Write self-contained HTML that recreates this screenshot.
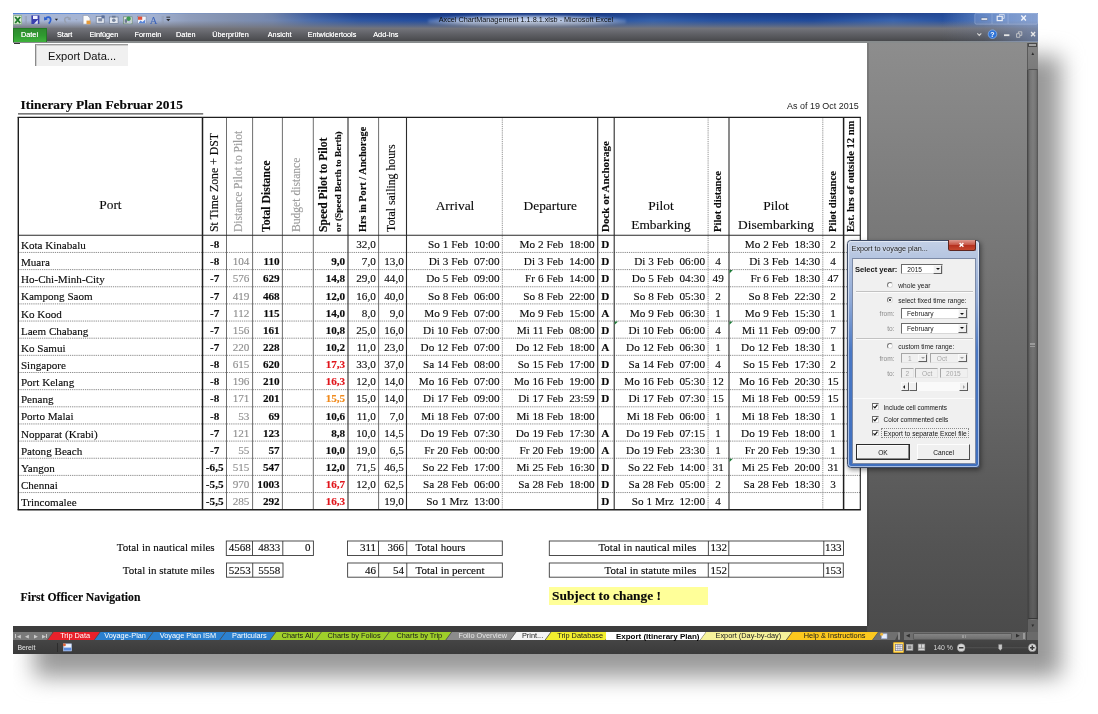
<!DOCTYPE html>
<html lang="de"><head><meta charset="utf-8"><title>Axcel ChartManagement 1.1.8.1.xlsb - Microsoft Excel</title>
<style>
html,body{margin:0;padding:0;background:#fff;}
body{width:1098px;height:714px;position:relative;overflow:hidden;font-family:"Liberation Serif",serif;}
div{position:absolute;box-sizing:border-box;white-space:pre;}
.s{font-family:"Liberation Sans",sans-serif;}
.t{font-family:"Liberation Serif",serif;color:#0a0a0a;-webkit-text-stroke:0.13px currentColor;}
.b{font-weight:bold;}
.g{color:#8e8e8e;}
.rot{transform-origin:0 0;transform:rotate(-90deg);}
.vl{background:#2a2a2a;}
.hl{background:#c4c4c4;}
</style></head><body>
<div id="root" style="left:0;top:0;width:1098px;height:714px;will-change:transform;">

<div style="left:34px;top:56px;width:1027px;height:621px;background:#999;filter:blur(11px);"></div>
<div style="left:0;top:0;width:13px;height:714px;background:#fff"></div>
<div id="win" style="left:13px;top:13px;width:1025px;height:641px;background:#4a4a4a;overflow:hidden">
</div>
<div style="left:13.00px;top:13.00px;width:1025.00px;height:15.50px;background:linear-gradient(90deg,#a9b7d5 0px,#a3b2d1 140px,#8f9dbb 175px,#8291b0 215px,#7487ae 260px,#4a6cab 300px,#2f57a2 345px,#27509f 390px,#1f4a9a 480px,#1e4897 560px,#3561ab 640px,#2752a0 700px,#214b9a 800px,#3964ae 880px,#2953a1 930px,#5f86c6 985px,#86a5d6 1025px);"></div>
<div style="left:263.00px;top:13.00px;width:715.00px;height:7.00px;background:linear-gradient(180deg,rgba(10,30,100,.45),rgba(10,30,100,0));-webkit-mask-image:linear-gradient(90deg,transparent 0,#000 90px,#000 640px,transparent 715px);mask-image:linear-gradient(90deg,transparent 0,#000 90px,#000 640px,transparent 715px);"></div>
<div style="left:428.00px;top:14.50px;width:198.00px;height:13.00px;background:radial-gradient(ellipse at center,rgba(222,231,248,.92) 0%,rgba(222,231,248,.7) 50%,rgba(222,231,248,0) 78%);filter:blur(1.2px);"></div>
<div style="left:13.00px;top:13.00px;width:1025.00px;height:15.50px;background:linear-gradient(180deg,rgba(116,117,124,0) 0%,rgba(116,117,124,0) 48%,rgba(116,117,124,.5) 74%,rgba(116,117,124,1) 97%);"></div>
<div style="left:13.00px;top:13.00px;width:240.00px;height:1.00px;background:linear-gradient(90deg,rgba(70,125,215,.85),rgba(70,125,215,0))"></div>
<div style="left:13.00px;top:27.50px;width:1025.00px;height:15.00px;background:linear-gradient(180deg,#74757c 0%,#606166 45%,#48494c 100%);border-bottom:2px solid #878b8c;"></div>
<div style="left:13.00px;top:27.50px;width:33.60px;height:14.50px;background:linear-gradient(180deg,#2f8a2f 0%,#2f9a30 50%,#3fb23c 100%);border:1px solid #237a25;border-bottom:none;"></div>
<div class="s" style="top:30.82px;font-size:7.3px;line-height:8.76px;left:-170.50px;width:400px;text-align:center;color:#f4f4f4;text-shadow:0 0 .4px #fff;">Datei</div>
<div class="s" style="top:30.82px;font-size:7.3px;line-height:8.76px;left:-135.30px;width:400px;text-align:center;color:#f4f4f4;text-shadow:0 0 .4px #fff;">Start</div>
<div class="s" style="top:30.82px;font-size:7.3px;line-height:8.76px;left:-96.20px;width:400px;text-align:center;color:#f4f4f4;text-shadow:0 0 .4px #fff;">Einfügen</div>
<div class="s" style="top:30.82px;font-size:7.3px;line-height:8.76px;left:-52.00px;width:400px;text-align:center;color:#f4f4f4;text-shadow:0 0 .4px #fff;">Formeln</div>
<div class="s" style="top:30.82px;font-size:7.3px;line-height:8.76px;left:-14.20px;width:400px;text-align:center;color:#f4f4f4;text-shadow:0 0 .4px #fff;">Daten</div>
<div class="s" style="top:30.82px;font-size:7.3px;line-height:8.76px;left:30.50px;width:400px;text-align:center;color:#f4f4f4;text-shadow:0 0 .4px #fff;">Überprüfen</div>
<div class="s" style="top:30.82px;font-size:7.3px;line-height:8.76px;left:79.70px;width:400px;text-align:center;color:#f4f4f4;text-shadow:0 0 .4px #fff;">Ansicht</div>
<div class="s" style="top:30.82px;font-size:7.3px;line-height:8.76px;left:132.00px;width:400px;text-align:center;color:#f4f4f4;text-shadow:0 0 .4px #fff;">Entwicklertools</div>
<div class="s" style="top:30.82px;font-size:7.3px;line-height:8.76px;left:185.80px;width:400px;text-align:center;color:#f4f4f4;text-shadow:0 0 .4px #fff;">Add-Ins</div>
<div class="s" style="top:15.85px;font-size:7.25px;line-height:8.70px;left:326.00px;width:400px;text-align:center;color:#0c0c0c;">Axcel ChartManagement 1.1.8.1.xlsb - Microsoft Excel</div>
<div style="left:867.00px;top:42.50px;width:160.00px;height:589.50px;background:linear-gradient(180deg,#8d8d8d 0%,#7d7d7d 25%,#6a6a6a 55%,#545454 85%,#4b4b4b 100%);"></div>
<div style="left:867.00px;top:42.50px;width:1.50px;height:583.50px;background:rgba(0,0,0,.12);"></div>
<div style="left:13.00px;top:42.50px;width:854.00px;height:583.50px;background:#fff;"></div>
<div style="left:1027.00px;top:42.50px;width:11.00px;height:589.50px;background:linear-gradient(90deg,#5a5a5a,#747474 40%,#6a6a6a 80%,#505050);border-left:1px solid #474747;"></div>
<div style="left:13.00px;top:626.00px;width:854.00px;height:6.00px;background:#3d3d3d;"></div>
<div style="left:13.00px;top:632.00px;width:1025.00px;height:8.20px;background:#4b4b4b;"></div>
<div style="left:13.00px;top:640.00px;width:1025.00px;height:14.00px;background:linear-gradient(180deg,#454545,#3a3a3a);"></div>
<div style="left:35.00px;top:44.00px;width:93.00px;height:22.00px;background:#f0f0f0;border-left:1px solid #8a8a8a;border-top:1px solid #9c9c9c;box-shadow:inset 1px 1px 0 #cfcfcf;"></div>
<div class="s" style="top:49.61px;font-size:11.15px;line-height:13.38px;left:48.00px;color:#111;">Export Data...</div>
<div style="left:13.50px;top:42.60px;width:6.00px;height:1.40px;background:#333;"></div>
<div class="t b" style="top:96.56px;font-size:13.4px;line-height:16.08px;left:20.60px;">Itinerary Plan Februar 2015</div>
<div class="s" style="top:100.83px;font-size:8.95px;line-height:10.74px;right:239.40px;color:#222;">As of 19 Oct 2015</div>
<svg style="position:absolute;left:0;top:0" width="1098" height="714" viewBox="0 0 1098 714"><line x1="18.30" y1="252.45" x2="860.30" y2="252.45" stroke="#8c8c8c" stroke-width="1" stroke-dasharray="1.25 0.9"/><line x1="18.30" y1="269.60" x2="860.30" y2="269.60" stroke="#8c8c8c" stroke-width="1" stroke-dasharray="1.25 0.9"/><line x1="18.30" y1="286.75" x2="860.30" y2="286.75" stroke="#8c8c8c" stroke-width="1" stroke-dasharray="1.25 0.9"/><line x1="18.30" y1="303.90" x2="860.30" y2="303.90" stroke="#8c8c8c" stroke-width="1" stroke-dasharray="1.25 0.9"/><line x1="18.30" y1="321.05" x2="860.30" y2="321.05" stroke="#8c8c8c" stroke-width="1" stroke-dasharray="1.25 0.9"/><line x1="18.30" y1="338.20" x2="860.30" y2="338.20" stroke="#8c8c8c" stroke-width="1" stroke-dasharray="1.25 0.9"/><line x1="18.30" y1="355.35" x2="860.30" y2="355.35" stroke="#8c8c8c" stroke-width="1" stroke-dasharray="1.25 0.9"/><line x1="18.30" y1="372.50" x2="860.30" y2="372.50" stroke="#8c8c8c" stroke-width="1" stroke-dasharray="1.25 0.9"/><line x1="18.30" y1="389.65" x2="860.30" y2="389.65" stroke="#8c8c8c" stroke-width="1" stroke-dasharray="1.25 0.9"/><line x1="18.30" y1="406.80" x2="860.30" y2="406.80" stroke="#8c8c8c" stroke-width="1" stroke-dasharray="1.25 0.9"/><line x1="18.30" y1="423.95" x2="860.30" y2="423.95" stroke="#8c8c8c" stroke-width="1" stroke-dasharray="1.25 0.9"/><line x1="18.30" y1="441.10" x2="860.30" y2="441.10" stroke="#8c8c8c" stroke-width="1" stroke-dasharray="1.25 0.9"/><line x1="18.30" y1="458.25" x2="860.30" y2="458.25" stroke="#8c8c8c" stroke-width="1" stroke-dasharray="1.25 0.9"/><line x1="18.30" y1="475.40" x2="860.30" y2="475.40" stroke="#8c8c8c" stroke-width="1" stroke-dasharray="1.25 0.9"/><line x1="18.30" y1="492.55" x2="860.30" y2="492.55" stroke="#8c8c8c" stroke-width="1" stroke-dasharray="1.25 0.9"/><line x1="202.50" y1="117.30" x2="202.50" y2="509.70" stroke="#1e1e1e" stroke-width="1.5"/><line x1="226.50" y1="117.30" x2="226.50" y2="509.70" stroke="#5e5e5e" stroke-width="0.9"/><line x1="252.60" y1="117.30" x2="252.60" y2="509.70" stroke="#5e5e5e" stroke-width="0.9"/><line x1="282.40" y1="117.30" x2="282.40" y2="509.70" stroke="#5e5e5e" stroke-width="0.9"/><line x1="313.30" y1="117.30" x2="313.30" y2="509.70" stroke="#5e5e5e" stroke-width="0.9"/><line x1="348.00" y1="117.30" x2="348.00" y2="509.70" stroke="#2c2c2c" stroke-width="1.1"/><line x1="378.60" y1="117.30" x2="378.60" y2="509.70" stroke="#5e5e5e" stroke-width="0.9"/><line x1="406.50" y1="117.30" x2="406.50" y2="509.70" stroke="#2c2c2c" stroke-width="1.1"/><line x1="502.30" y1="117.30" x2="502.30" y2="509.70" stroke="#959595" stroke-width="1" stroke-dasharray="1.25 0.9"/><line x1="597.70" y1="117.30" x2="597.70" y2="509.70" stroke="#2c2c2c" stroke-width="1.1"/><line x1="614.20" y1="117.30" x2="614.20" y2="509.70" stroke="#2c2c2c" stroke-width="1.1"/><line x1="708.10" y1="117.30" x2="708.10" y2="509.70" stroke="#959595" stroke-width="1" stroke-dasharray="1.25 0.9"/><line x1="729.00" y1="117.30" x2="729.00" y2="509.70" stroke="#2c2c2c" stroke-width="1.1"/><line x1="822.80" y1="117.30" x2="822.80" y2="509.70" stroke="#959595" stroke-width="1" stroke-dasharray="1.25 0.9"/><line x1="843.60" y1="117.30" x2="843.60" y2="509.70" stroke="#1e1e1e" stroke-width="1.5"/><line x1="18.30" y1="235.30" x2="860.30" y2="235.30" stroke="#2a2a2a" stroke-width="1.1"/><line x1="17.60" y1="117.30" x2="860.85" y2="117.30" stroke="#1e1e1e" stroke-width="1.3"/><line x1="17.60" y1="509.70" x2="860.85" y2="509.70" stroke="#1e1e1e" stroke-width="1.4"/><line x1="18.30" y1="117.30" x2="18.30" y2="509.70" stroke="#1e1e1e" stroke-width="1.4"/><line x1="860.30" y1="117.30" x2="860.30" y2="509.70" stroke="#1e1e1e" stroke-width="1.1"/><line x1="18.00" y1="113.90" x2="203.20" y2="113.90" stroke="#222" stroke-width="1"/></svg>
<div class="t rot" style="left:207.22px;top:232.20px;font-size:11.8px;line-height:14.16px;">St Time Zone + DST</div>
<div class="t g rot" style="left:232.40px;top:232.20px;font-size:11.5px;line-height:13.80px;color:#9c9c9c;">Distance Pilot to Pilot</div>
<div class="t b rot" style="left:260.28px;top:232.20px;font-size:11.7px;line-height:14.04px;">Total Distance</div>
<div class="t g rot" style="left:289.74px;top:232.20px;font-size:11.6px;line-height:13.92px;color:#9c9c9c;">Budget distance</div>
<div class="t b rot" style="left:317.34px;top:232.20px;font-size:11.6px;line-height:13.92px;">Speed Pilot to Pilot</div>
<div class="t b rot" style="left:333.04px;top:232.20px;font-size:9.27px;line-height:11.12px;">or (Speed Berth to Berth)</div>
<div class="t b rot" style="left:356.82px;top:232.20px;font-size:10.3px;line-height:12.36px;">Hrs in Port / Anchorage</div>
<div class="t rot" style="left:384.12px;top:232.20px;font-size:11.8px;line-height:14.16px;">Total sailing hours</div>
<div class="t b rot" style="left:599.40px;top:232.20px;font-size:11.0px;line-height:13.20px;">Dock or Anchorage</div>
<div class="t b rot" style="left:712.24px;top:232.00px;font-size:10.6px;line-height:12.72px;">Pilot distance</div>
<div class="t b rot" style="left:827.04px;top:232.00px;font-size:10.6px;line-height:12.72px;">Pilot distance</div>
<div class="t b rot" style="left:845.27px;top:232.20px;font-size:10.55px;line-height:12.66px;">Est. hrs of outside 12 nm</div>
<div class="t" style="top:197.46px;font-size:13.4px;line-height:16.08px;left:-89.60px;width:400px;text-align:center;">Port</div>
<div class="t" style="top:197.76px;font-size:13.4px;line-height:16.08px;left:255.00px;width:400px;text-align:center;">Arrival</div>
<div class="t" style="top:197.76px;font-size:13.4px;line-height:16.08px;left:350.30px;width:400px;text-align:center;">Departure</div>
<div class="t" style="top:197.76px;font-size:13.4px;line-height:16.08px;left:461.00px;width:400px;text-align:center;">Pilot</div>
<div class="t" style="top:217.26px;font-size:13.4px;line-height:16.08px;left:461.00px;width:400px;text-align:center;">Embarking</div>
<div class="t" style="top:197.76px;font-size:13.4px;line-height:16.08px;left:576.00px;width:400px;text-align:center;">Pilot</div>
<div class="t" style="top:217.26px;font-size:13.4px;line-height:16.08px;left:576.00px;width:400px;text-align:center;">Disembarking</div>
<div class="t" style="top:238.97px;font-size:11.1px;line-height:13.32px;left:20.90px;">Kota Kinabalu</div>
<div class="t b" style="top:238.06px;font-size:11.2px;line-height:13.44px;left:14.70px;width:400px;text-align:center;">-8</div>
<div class="t" style="top:238.06px;font-size:11.2px;line-height:13.44px;right:722.20px;">32,0</div>
<div class="t" style="top:238.06px;font-size:11.2px;line-height:13.44px;right:598.50px;word-spacing:0.15px;">So 1 Feb  10:00</div>
<div class="t" style="top:238.06px;font-size:11.2px;line-height:13.44px;right:503.30px;word-spacing:0.15px;">Mo 2 Feb  18:00</div>
<div class="t b" style="top:238.06px;font-size:11.2px;line-height:13.44px;left:405.25px;width:400px;text-align:center;">D</div>
<div class="t" style="top:238.06px;font-size:11.2px;line-height:13.44px;right:278.00px;word-spacing:0.15px;">Mo 2 Feb  18:30</div>
<div class="t" style="top:238.06px;font-size:11.2px;line-height:13.44px;left:633.10px;width:400px;text-align:center;">2</div>
<div class="t" style="top:256.12px;font-size:11.1px;line-height:13.32px;left:20.90px;">Muara</div>
<div class="t b" style="top:255.21px;font-size:11.2px;line-height:13.44px;left:14.70px;width:400px;text-align:center;">-8</div>
<div class="t g" style="top:255.21px;font-size:11.2px;line-height:13.44px;right:848.60px;">104</div>
<div class="t b" style="top:255.21px;font-size:11.2px;line-height:13.44px;right:818.30px;">110</div>
<div class="t b" style="top:255.21px;font-size:11.2px;line-height:13.44px;right:752.80px;">9,0</div>
<div class="t" style="top:255.21px;font-size:11.2px;line-height:13.44px;right:722.20px;">7,0</div>
<div class="t" style="top:255.21px;font-size:11.2px;line-height:13.44px;right:694.20px;">13,0</div>
<div class="t" style="top:255.21px;font-size:11.2px;line-height:13.44px;right:598.50px;word-spacing:0.15px;">Di 3 Feb  07:00</div>
<div class="t" style="top:255.21px;font-size:11.2px;line-height:13.44px;right:503.30px;word-spacing:0.15px;">Di 3 Feb  14:00</div>
<div class="t b" style="top:255.21px;font-size:11.2px;line-height:13.44px;left:405.25px;width:400px;text-align:center;">D</div>
<div class="t" style="top:255.21px;font-size:11.2px;line-height:13.44px;right:393.00px;word-spacing:0.15px;">Di 3 Feb  06:00</div>
<div class="t" style="top:255.21px;font-size:11.2px;line-height:13.44px;left:518.15px;width:400px;text-align:center;">4</div>
<div class="t" style="top:255.21px;font-size:11.2px;line-height:13.44px;right:278.00px;word-spacing:0.15px;">Di 3 Feb  14:30</div>
<div class="t" style="top:255.21px;font-size:11.2px;line-height:13.44px;left:633.10px;width:400px;text-align:center;">4</div>
<div class="t" style="top:273.26px;font-size:11.1px;line-height:13.32px;left:20.90px;">Ho-Chi-Minh-City</div>
<div class="t b" style="top:272.35px;font-size:11.2px;line-height:13.44px;left:14.70px;width:400px;text-align:center;">-7</div>
<div class="t g" style="top:272.35px;font-size:11.2px;line-height:13.44px;right:848.60px;">576</div>
<div class="t b" style="top:272.35px;font-size:11.2px;line-height:13.44px;right:818.30px;">629</div>
<div class="t b" style="top:272.35px;font-size:11.2px;line-height:13.44px;right:752.80px;">14,8</div>
<div class="t" style="top:272.35px;font-size:11.2px;line-height:13.44px;right:722.20px;">29,0</div>
<div class="t" style="top:272.35px;font-size:11.2px;line-height:13.44px;right:694.20px;">44,0</div>
<div class="t" style="top:272.35px;font-size:11.2px;line-height:13.44px;right:598.50px;word-spacing:0.15px;">Do 5 Feb  09:00</div>
<div class="t" style="top:272.35px;font-size:11.2px;line-height:13.44px;right:503.30px;word-spacing:0.15px;">Fr 6 Feb  14:00</div>
<div class="t b" style="top:272.35px;font-size:11.2px;line-height:13.44px;left:405.25px;width:400px;text-align:center;">D</div>
<div class="t" style="top:272.35px;font-size:11.2px;line-height:13.44px;right:393.00px;word-spacing:0.15px;">Do 5 Feb  04:30</div>
<div class="t" style="top:272.35px;font-size:11.2px;line-height:13.44px;left:518.15px;width:400px;text-align:center;">49</div>
<div class="t" style="top:272.35px;font-size:11.2px;line-height:13.44px;right:278.00px;word-spacing:0.15px;">Fr 6 Feb  18:30</div>
<div class="t" style="top:272.35px;font-size:11.2px;line-height:13.44px;left:633.10px;width:400px;text-align:center;">47</div>
<div class="t" style="top:290.41px;font-size:11.1px;line-height:13.32px;left:20.90px;">Kampong Saom</div>
<div class="t b" style="top:289.50px;font-size:11.2px;line-height:13.44px;left:14.70px;width:400px;text-align:center;">-7</div>
<div class="t g" style="top:289.50px;font-size:11.2px;line-height:13.44px;right:848.60px;">419</div>
<div class="t b" style="top:289.50px;font-size:11.2px;line-height:13.44px;right:818.30px;">468</div>
<div class="t b" style="top:289.50px;font-size:11.2px;line-height:13.44px;right:752.80px;">12,0</div>
<div class="t" style="top:289.50px;font-size:11.2px;line-height:13.44px;right:722.20px;">16,0</div>
<div class="t" style="top:289.50px;font-size:11.2px;line-height:13.44px;right:694.20px;">40,0</div>
<div class="t" style="top:289.50px;font-size:11.2px;line-height:13.44px;right:598.50px;word-spacing:0.15px;">So 8 Feb  06:00</div>
<div class="t" style="top:289.50px;font-size:11.2px;line-height:13.44px;right:503.30px;word-spacing:0.15px;">So 8 Feb  22:00</div>
<div class="t b" style="top:289.50px;font-size:11.2px;line-height:13.44px;left:405.25px;width:400px;text-align:center;">D</div>
<div class="t" style="top:289.50px;font-size:11.2px;line-height:13.44px;right:393.00px;word-spacing:0.15px;">So 8 Feb  05:30</div>
<div class="t" style="top:289.50px;font-size:11.2px;line-height:13.44px;left:518.15px;width:400px;text-align:center;">2</div>
<div class="t" style="top:289.50px;font-size:11.2px;line-height:13.44px;right:278.00px;word-spacing:0.15px;">So 8 Feb  22:30</div>
<div class="t" style="top:289.50px;font-size:11.2px;line-height:13.44px;left:633.10px;width:400px;text-align:center;">2</div>
<div class="t" style="top:307.56px;font-size:11.1px;line-height:13.32px;left:20.90px;">Ko Kood</div>
<div class="t b" style="top:306.65px;font-size:11.2px;line-height:13.44px;left:14.70px;width:400px;text-align:center;">-7</div>
<div class="t g" style="top:306.65px;font-size:11.2px;line-height:13.44px;right:848.60px;">112</div>
<div class="t b" style="top:306.65px;font-size:11.2px;line-height:13.44px;right:818.30px;">115</div>
<div class="t b" style="top:306.65px;font-size:11.2px;line-height:13.44px;right:752.80px;">14,0</div>
<div class="t" style="top:306.65px;font-size:11.2px;line-height:13.44px;right:722.20px;">8,0</div>
<div class="t" style="top:306.65px;font-size:11.2px;line-height:13.44px;right:694.20px;">9,0</div>
<div class="t" style="top:306.65px;font-size:11.2px;line-height:13.44px;right:598.50px;word-spacing:0.15px;">Mo 9 Feb  07:00</div>
<div class="t" style="top:306.65px;font-size:11.2px;line-height:13.44px;right:503.30px;word-spacing:0.15px;">Mo 9 Feb  15:00</div>
<div class="t b" style="top:306.65px;font-size:11.2px;line-height:13.44px;left:405.25px;width:400px;text-align:center;">A</div>
<div class="t" style="top:306.65px;font-size:11.2px;line-height:13.44px;right:393.00px;word-spacing:0.15px;">Mo 9 Feb  06:30</div>
<div class="t" style="top:306.65px;font-size:11.2px;line-height:13.44px;left:518.15px;width:400px;text-align:center;">1</div>
<div class="t" style="top:306.65px;font-size:11.2px;line-height:13.44px;right:278.00px;word-spacing:0.15px;">Mo 9 Feb  15:30</div>
<div class="t" style="top:306.65px;font-size:11.2px;line-height:13.44px;left:633.10px;width:400px;text-align:center;">1</div>
<div class="t" style="top:324.71px;font-size:11.1px;line-height:13.32px;left:20.90px;">Laem Chabang</div>
<div class="t b" style="top:323.80px;font-size:11.2px;line-height:13.44px;left:14.70px;width:400px;text-align:center;">-7</div>
<div class="t g" style="top:323.80px;font-size:11.2px;line-height:13.44px;right:848.60px;">156</div>
<div class="t b" style="top:323.80px;font-size:11.2px;line-height:13.44px;right:818.30px;">161</div>
<div class="t b" style="top:323.80px;font-size:11.2px;line-height:13.44px;right:752.80px;">10,8</div>
<div class="t" style="top:323.80px;font-size:11.2px;line-height:13.44px;right:722.20px;">25,0</div>
<div class="t" style="top:323.80px;font-size:11.2px;line-height:13.44px;right:694.20px;">16,0</div>
<div class="t" style="top:323.80px;font-size:11.2px;line-height:13.44px;right:598.50px;word-spacing:0.15px;">Di 10 Feb  07:00</div>
<div class="t" style="top:323.80px;font-size:11.2px;line-height:13.44px;right:503.30px;word-spacing:0.15px;">Mi 11 Feb  08:00</div>
<div class="t b" style="top:323.80px;font-size:11.2px;line-height:13.44px;left:405.25px;width:400px;text-align:center;">D</div>
<div class="t" style="top:323.80px;font-size:11.2px;line-height:13.44px;right:393.00px;word-spacing:0.15px;">Di 10 Feb  06:00</div>
<div class="t" style="top:323.80px;font-size:11.2px;line-height:13.44px;left:518.15px;width:400px;text-align:center;">4</div>
<div class="t" style="top:323.80px;font-size:11.2px;line-height:13.44px;right:278.00px;word-spacing:0.15px;">Mi 11 Feb  09:00</div>
<div class="t" style="top:323.80px;font-size:11.2px;line-height:13.44px;left:633.10px;width:400px;text-align:center;">7</div>
<div class="t" style="top:341.86px;font-size:11.1px;line-height:13.32px;left:20.90px;">Ko Samui</div>
<div class="t b" style="top:340.95px;font-size:11.2px;line-height:13.44px;left:14.70px;width:400px;text-align:center;">-7</div>
<div class="t g" style="top:340.95px;font-size:11.2px;line-height:13.44px;right:848.60px;">220</div>
<div class="t b" style="top:340.95px;font-size:11.2px;line-height:13.44px;right:818.30px;">228</div>
<div class="t b" style="top:340.95px;font-size:11.2px;line-height:13.44px;right:752.80px;">10,2</div>
<div class="t" style="top:340.95px;font-size:11.2px;line-height:13.44px;right:722.20px;">11,0</div>
<div class="t" style="top:340.95px;font-size:11.2px;line-height:13.44px;right:694.20px;">23,0</div>
<div class="t" style="top:340.95px;font-size:11.2px;line-height:13.44px;right:598.50px;word-spacing:0.15px;">Do 12 Feb  07:00</div>
<div class="t" style="top:340.95px;font-size:11.2px;line-height:13.44px;right:503.30px;word-spacing:0.15px;">Do 12 Feb  18:00</div>
<div class="t b" style="top:340.95px;font-size:11.2px;line-height:13.44px;left:405.25px;width:400px;text-align:center;">A</div>
<div class="t" style="top:340.95px;font-size:11.2px;line-height:13.44px;right:393.00px;word-spacing:0.15px;">Do 12 Feb  06:30</div>
<div class="t" style="top:340.95px;font-size:11.2px;line-height:13.44px;left:518.15px;width:400px;text-align:center;">1</div>
<div class="t" style="top:340.95px;font-size:11.2px;line-height:13.44px;right:278.00px;word-spacing:0.15px;">Do 12 Feb  18:30</div>
<div class="t" style="top:340.95px;font-size:11.2px;line-height:13.44px;left:633.10px;width:400px;text-align:center;">1</div>
<div class="t" style="top:359.01px;font-size:11.1px;line-height:13.32px;left:20.90px;">Singapore</div>
<div class="t b" style="top:358.10px;font-size:11.2px;line-height:13.44px;left:14.70px;width:400px;text-align:center;">-8</div>
<div class="t g" style="top:358.10px;font-size:11.2px;line-height:13.44px;right:848.60px;">615</div>
<div class="t b" style="top:358.10px;font-size:11.2px;line-height:13.44px;right:818.30px;">620</div>
<div class="t b" style="top:358.10px;font-size:11.2px;line-height:13.44px;right:752.80px;color:#e0141a;">17,3</div>
<div class="t" style="top:358.10px;font-size:11.2px;line-height:13.44px;right:722.20px;">33,0</div>
<div class="t" style="top:358.10px;font-size:11.2px;line-height:13.44px;right:694.20px;">37,0</div>
<div class="t" style="top:358.10px;font-size:11.2px;line-height:13.44px;right:598.50px;word-spacing:0.15px;">Sa 14 Feb  08:00</div>
<div class="t" style="top:358.10px;font-size:11.2px;line-height:13.44px;right:503.30px;word-spacing:0.15px;">So 15 Feb  17:00</div>
<div class="t b" style="top:358.10px;font-size:11.2px;line-height:13.44px;left:405.25px;width:400px;text-align:center;">D</div>
<div class="t" style="top:358.10px;font-size:11.2px;line-height:13.44px;right:393.00px;word-spacing:0.15px;">Sa 14 Feb  07:00</div>
<div class="t" style="top:358.10px;font-size:11.2px;line-height:13.44px;left:518.15px;width:400px;text-align:center;">4</div>
<div class="t" style="top:358.10px;font-size:11.2px;line-height:13.44px;right:278.00px;word-spacing:0.15px;">So 15 Feb  17:30</div>
<div class="t" style="top:358.10px;font-size:11.2px;line-height:13.44px;left:633.10px;width:400px;text-align:center;">2</div>
<div class="t" style="top:376.16px;font-size:11.1px;line-height:13.32px;left:20.90px;">Port Kelang</div>
<div class="t b" style="top:375.25px;font-size:11.2px;line-height:13.44px;left:14.70px;width:400px;text-align:center;">-8</div>
<div class="t g" style="top:375.25px;font-size:11.2px;line-height:13.44px;right:848.60px;">196</div>
<div class="t b" style="top:375.25px;font-size:11.2px;line-height:13.44px;right:818.30px;">210</div>
<div class="t b" style="top:375.25px;font-size:11.2px;line-height:13.44px;right:752.80px;color:#e0141a;">16,3</div>
<div class="t" style="top:375.25px;font-size:11.2px;line-height:13.44px;right:722.20px;">12,0</div>
<div class="t" style="top:375.25px;font-size:11.2px;line-height:13.44px;right:694.20px;">14,0</div>
<div class="t" style="top:375.25px;font-size:11.2px;line-height:13.44px;right:598.50px;word-spacing:0.15px;">Mo 16 Feb  07:00</div>
<div class="t" style="top:375.25px;font-size:11.2px;line-height:13.44px;right:503.30px;word-spacing:0.15px;">Mo 16 Feb  19:00</div>
<div class="t b" style="top:375.25px;font-size:11.2px;line-height:13.44px;left:405.25px;width:400px;text-align:center;">D</div>
<div class="t" style="top:375.25px;font-size:11.2px;line-height:13.44px;right:393.00px;word-spacing:0.15px;">Mo 16 Feb  05:30</div>
<div class="t" style="top:375.25px;font-size:11.2px;line-height:13.44px;left:518.15px;width:400px;text-align:center;">12</div>
<div class="t" style="top:375.25px;font-size:11.2px;line-height:13.44px;right:278.00px;word-spacing:0.15px;">Mo 16 Feb  20:30</div>
<div class="t" style="top:375.25px;font-size:11.2px;line-height:13.44px;left:633.10px;width:400px;text-align:center;">15</div>
<div class="t" style="top:393.31px;font-size:11.1px;line-height:13.32px;left:20.90px;">Penang</div>
<div class="t b" style="top:392.40px;font-size:11.2px;line-height:13.44px;left:14.70px;width:400px;text-align:center;">-8</div>
<div class="t g" style="top:392.40px;font-size:11.2px;line-height:13.44px;right:848.60px;">171</div>
<div class="t b" style="top:392.40px;font-size:11.2px;line-height:13.44px;right:818.30px;">201</div>
<div class="t b" style="top:392.40px;font-size:11.2px;line-height:13.44px;right:752.80px;color:#f08a1c;">15,5</div>
<div class="t" style="top:392.40px;font-size:11.2px;line-height:13.44px;right:722.20px;">15,0</div>
<div class="t" style="top:392.40px;font-size:11.2px;line-height:13.44px;right:694.20px;">14,0</div>
<div class="t" style="top:392.40px;font-size:11.2px;line-height:13.44px;right:598.50px;word-spacing:0.15px;">Di 17 Feb  09:00</div>
<div class="t" style="top:392.40px;font-size:11.2px;line-height:13.44px;right:503.30px;word-spacing:0.15px;">Di 17 Feb  23:59</div>
<div class="t b" style="top:392.40px;font-size:11.2px;line-height:13.44px;left:405.25px;width:400px;text-align:center;">D</div>
<div class="t" style="top:392.40px;font-size:11.2px;line-height:13.44px;right:393.00px;word-spacing:0.15px;">Di 17 Feb  07:30</div>
<div class="t" style="top:392.40px;font-size:11.2px;line-height:13.44px;left:518.15px;width:400px;text-align:center;">15</div>
<div class="t" style="top:392.40px;font-size:11.2px;line-height:13.44px;right:278.00px;word-spacing:0.15px;">Mi 18 Feb  00:59</div>
<div class="t" style="top:392.40px;font-size:11.2px;line-height:13.44px;left:633.10px;width:400px;text-align:center;">15</div>
<div class="t" style="top:410.46px;font-size:11.1px;line-height:13.32px;left:20.90px;">Porto Malai</div>
<div class="t b" style="top:409.55px;font-size:11.2px;line-height:13.44px;left:14.70px;width:400px;text-align:center;">-8</div>
<div class="t g" style="top:409.55px;font-size:11.2px;line-height:13.44px;right:848.60px;">53</div>
<div class="t b" style="top:409.55px;font-size:11.2px;line-height:13.44px;right:818.30px;">69</div>
<div class="t b" style="top:409.55px;font-size:11.2px;line-height:13.44px;right:752.80px;">10,6</div>
<div class="t" style="top:409.55px;font-size:11.2px;line-height:13.44px;right:722.20px;">11,0</div>
<div class="t" style="top:409.55px;font-size:11.2px;line-height:13.44px;right:694.20px;">7,0</div>
<div class="t" style="top:409.55px;font-size:11.2px;line-height:13.44px;right:598.50px;word-spacing:0.15px;">Mi 18 Feb  07:00</div>
<div class="t" style="top:409.55px;font-size:11.2px;line-height:13.44px;right:503.30px;word-spacing:0.15px;">Mi 18 Feb  18:00</div>
<div class="t" style="top:409.55px;font-size:11.2px;line-height:13.44px;right:393.00px;word-spacing:0.15px;">Mi 18 Feb  06:00</div>
<div class="t" style="top:409.55px;font-size:11.2px;line-height:13.44px;left:518.15px;width:400px;text-align:center;">1</div>
<div class="t" style="top:409.55px;font-size:11.2px;line-height:13.44px;right:278.00px;word-spacing:0.15px;">Mi 18 Feb  18:30</div>
<div class="t" style="top:409.55px;font-size:11.2px;line-height:13.44px;left:633.10px;width:400px;text-align:center;">1</div>
<div class="t" style="top:427.61px;font-size:11.1px;line-height:13.32px;left:20.90px;">Nopparat (Krabi)</div>
<div class="t b" style="top:426.70px;font-size:11.2px;line-height:13.44px;left:14.70px;width:400px;text-align:center;">-7</div>
<div class="t g" style="top:426.70px;font-size:11.2px;line-height:13.44px;right:848.60px;">121</div>
<div class="t b" style="top:426.70px;font-size:11.2px;line-height:13.44px;right:818.30px;">123</div>
<div class="t b" style="top:426.70px;font-size:11.2px;line-height:13.44px;right:752.80px;">8,8</div>
<div class="t" style="top:426.70px;font-size:11.2px;line-height:13.44px;right:722.20px;">10,0</div>
<div class="t" style="top:426.70px;font-size:11.2px;line-height:13.44px;right:694.20px;">14,5</div>
<div class="t" style="top:426.70px;font-size:11.2px;line-height:13.44px;right:598.50px;word-spacing:0.15px;">Do 19 Feb  07:30</div>
<div class="t" style="top:426.70px;font-size:11.2px;line-height:13.44px;right:503.30px;word-spacing:0.15px;">Do 19 Feb  17:30</div>
<div class="t b" style="top:426.70px;font-size:11.2px;line-height:13.44px;left:405.25px;width:400px;text-align:center;">A</div>
<div class="t" style="top:426.70px;font-size:11.2px;line-height:13.44px;right:393.00px;word-spacing:0.15px;">Do 19 Feb  07:15</div>
<div class="t" style="top:426.70px;font-size:11.2px;line-height:13.44px;left:518.15px;width:400px;text-align:center;">1</div>
<div class="t" style="top:426.70px;font-size:11.2px;line-height:13.44px;right:278.00px;word-spacing:0.15px;">Do 19 Feb  18:00</div>
<div class="t" style="top:426.70px;font-size:11.2px;line-height:13.44px;left:633.10px;width:400px;text-align:center;">1</div>
<div class="t" style="top:444.76px;font-size:11.1px;line-height:13.32px;left:20.90px;">Patong Beach</div>
<div class="t b" style="top:443.85px;font-size:11.2px;line-height:13.44px;left:14.70px;width:400px;text-align:center;">-7</div>
<div class="t g" style="top:443.85px;font-size:11.2px;line-height:13.44px;right:848.60px;">55</div>
<div class="t b" style="top:443.85px;font-size:11.2px;line-height:13.44px;right:818.30px;">57</div>
<div class="t b" style="top:443.85px;font-size:11.2px;line-height:13.44px;right:752.80px;">10,0</div>
<div class="t" style="top:443.85px;font-size:11.2px;line-height:13.44px;right:722.20px;">19,0</div>
<div class="t" style="top:443.85px;font-size:11.2px;line-height:13.44px;right:694.20px;">6,5</div>
<div class="t" style="top:443.85px;font-size:11.2px;line-height:13.44px;right:598.50px;word-spacing:0.15px;">Fr 20 Feb  00:00</div>
<div class="t" style="top:443.85px;font-size:11.2px;line-height:13.44px;right:503.30px;word-spacing:0.15px;">Fr 20 Feb  19:00</div>
<div class="t b" style="top:443.85px;font-size:11.2px;line-height:13.44px;left:405.25px;width:400px;text-align:center;">A</div>
<div class="t" style="top:443.85px;font-size:11.2px;line-height:13.44px;right:393.00px;word-spacing:0.15px;">Do 19 Feb  23:30</div>
<div class="t" style="top:443.85px;font-size:11.2px;line-height:13.44px;left:518.15px;width:400px;text-align:center;">1</div>
<div class="t" style="top:443.85px;font-size:11.2px;line-height:13.44px;right:278.00px;word-spacing:0.15px;">Fr 20 Feb  19:30</div>
<div class="t" style="top:443.85px;font-size:11.2px;line-height:13.44px;left:633.10px;width:400px;text-align:center;">1</div>
<div class="t" style="top:461.91px;font-size:11.1px;line-height:13.32px;left:20.90px;">Yangon</div>
<div class="t b" style="top:461.00px;font-size:11.2px;line-height:13.44px;left:14.70px;width:400px;text-align:center;">-6,5</div>
<div class="t g" style="top:461.00px;font-size:11.2px;line-height:13.44px;right:848.60px;">515</div>
<div class="t b" style="top:461.00px;font-size:11.2px;line-height:13.44px;right:818.30px;">547</div>
<div class="t b" style="top:461.00px;font-size:11.2px;line-height:13.44px;right:752.80px;">12,0</div>
<div class="t" style="top:461.00px;font-size:11.2px;line-height:13.44px;right:722.20px;">71,5</div>
<div class="t" style="top:461.00px;font-size:11.2px;line-height:13.44px;right:694.20px;">46,5</div>
<div class="t" style="top:461.00px;font-size:11.2px;line-height:13.44px;right:598.50px;word-spacing:0.15px;">So 22 Feb  17:00</div>
<div class="t" style="top:461.00px;font-size:11.2px;line-height:13.44px;right:503.30px;word-spacing:0.15px;">Mi 25 Feb  16:30</div>
<div class="t b" style="top:461.00px;font-size:11.2px;line-height:13.44px;left:405.25px;width:400px;text-align:center;">D</div>
<div class="t" style="top:461.00px;font-size:11.2px;line-height:13.44px;right:393.00px;word-spacing:0.15px;">So 22 Feb  14:00</div>
<div class="t" style="top:461.00px;font-size:11.2px;line-height:13.44px;left:518.15px;width:400px;text-align:center;">31</div>
<div class="t" style="top:461.00px;font-size:11.2px;line-height:13.44px;right:278.00px;word-spacing:0.15px;">Mi 25 Feb  20:00</div>
<div class="t" style="top:461.00px;font-size:11.2px;line-height:13.44px;left:633.10px;width:400px;text-align:center;">31</div>
<div class="t" style="top:479.06px;font-size:11.1px;line-height:13.32px;left:20.90px;">Chennai</div>
<div class="t b" style="top:478.15px;font-size:11.2px;line-height:13.44px;left:14.70px;width:400px;text-align:center;">-5,5</div>
<div class="t g" style="top:478.15px;font-size:11.2px;line-height:13.44px;right:848.60px;">970</div>
<div class="t b" style="top:478.15px;font-size:11.2px;line-height:13.44px;right:818.30px;">1003</div>
<div class="t b" style="top:478.15px;font-size:11.2px;line-height:13.44px;right:752.80px;color:#e0141a;">16,7</div>
<div class="t" style="top:478.15px;font-size:11.2px;line-height:13.44px;right:722.20px;">12,0</div>
<div class="t" style="top:478.15px;font-size:11.2px;line-height:13.44px;right:694.20px;">62,5</div>
<div class="t" style="top:478.15px;font-size:11.2px;line-height:13.44px;right:598.50px;word-spacing:0.15px;">Sa 28 Feb  06:00</div>
<div class="t" style="top:478.15px;font-size:11.2px;line-height:13.44px;right:503.30px;word-spacing:0.15px;">Sa 28 Feb  18:00</div>
<div class="t b" style="top:478.15px;font-size:11.2px;line-height:13.44px;left:405.25px;width:400px;text-align:center;">D</div>
<div class="t" style="top:478.15px;font-size:11.2px;line-height:13.44px;right:393.00px;word-spacing:0.15px;">Sa 28 Feb  05:00</div>
<div class="t" style="top:478.15px;font-size:11.2px;line-height:13.44px;left:518.15px;width:400px;text-align:center;">2</div>
<div class="t" style="top:478.15px;font-size:11.2px;line-height:13.44px;right:278.00px;word-spacing:0.15px;">Sa 28 Feb  18:30</div>
<div class="t" style="top:478.15px;font-size:11.2px;line-height:13.44px;left:633.10px;width:400px;text-align:center;">3</div>
<div class="t" style="top:496.21px;font-size:11.1px;line-height:13.32px;left:20.90px;">Trincomalee</div>
<div class="t b" style="top:495.30px;font-size:11.2px;line-height:13.44px;left:14.70px;width:400px;text-align:center;">-5,5</div>
<div class="t g" style="top:495.30px;font-size:11.2px;line-height:13.44px;right:848.60px;">285</div>
<div class="t b" style="top:495.30px;font-size:11.2px;line-height:13.44px;right:818.30px;">292</div>
<div class="t b" style="top:495.30px;font-size:11.2px;line-height:13.44px;right:752.80px;color:#e0141a;">16,3</div>
<div class="t" style="top:495.30px;font-size:11.2px;line-height:13.44px;right:694.20px;">19,0</div>
<div class="t" style="top:495.30px;font-size:11.2px;line-height:13.44px;right:598.50px;word-spacing:0.15px;">So 1 Mrz  13:00</div>
<div class="t b" style="top:495.30px;font-size:11.2px;line-height:13.44px;left:405.25px;width:400px;text-align:center;">D</div>
<div class="t" style="top:495.30px;font-size:11.2px;line-height:13.44px;right:393.00px;word-spacing:0.15px;">So 1 Mrz  12:00</div>
<div class="t" style="top:495.30px;font-size:11.2px;line-height:13.44px;left:518.15px;width:400px;text-align:center;">4</div>
<svg style="position:absolute;left:0;top:0" width="1098" height="714" viewBox="0 0 1098 714"><polygon points="729.50,270.10 732.80,270.10 729.50,273.40" fill="#1b7a36"/><polygon points="614.70,321.55 618.00,321.55 614.70,324.85" fill="#1b7a36"/><polygon points="729.50,321.55 732.80,321.55 729.50,324.85" fill="#1b7a36"/><polygon points="729.50,458.75 732.80,458.75 729.50,462.05" fill="#1b7a36"/></svg>
<div class="t" style="top:541.15px;font-size:11.0px;line-height:13.20px;right:883.40px;">Total in nautical miles</div>
<div class="t" style="top:563.60px;font-size:11.0px;line-height:13.20px;right:883.40px;">Total in statute miles</div>
<svg style="position:absolute;left:0;top:538.80px" width="1098" height="18.50" viewBox="0 538.80 1098 18.50"><rect x="226.30" y="540.80" width="87.10" height="14.50" fill="none" stroke="#3a3a3a" stroke-width="0.9"/><line x1="252.50" y1="540.80" x2="252.50" y2="555.30" stroke="#3a3a3a" stroke-width="0.9"/><line x1="282.80" y1="540.80" x2="282.80" y2="555.30" stroke="#3a3a3a" stroke-width="0.9"/></svg>
<svg style="position:absolute;left:0;top:561.30px" width="1098" height="18.20" viewBox="0 561.30 1098 18.20"><rect x="226.30" y="563.30" width="56.50" height="14.20" fill="none" stroke="#3a3a3a" stroke-width="0.9"/><line x1="252.50" y1="563.30" x2="252.50" y2="577.50" stroke="#3a3a3a" stroke-width="0.9"/></svg>
<div class="t" style="top:541.15px;font-size:11.0px;line-height:13.20px;right:847.20px;">4568</div>
<div class="t" style="top:541.15px;font-size:11.0px;line-height:13.20px;right:817.70px;">4833</div>
<div class="t" style="top:541.15px;font-size:11.0px;line-height:13.20px;right:787.50px;">0</div>
<div class="t" style="top:563.60px;font-size:11.0px;line-height:13.20px;right:847.20px;">5253</div>
<div class="t" style="top:563.60px;font-size:11.0px;line-height:13.20px;right:817.70px;">5558</div>
<svg style="position:absolute;left:0;top:538.80px" width="1098" height="18.50" viewBox="0 538.80 1098 18.50"><rect x="347.50" y="540.80" width="154.80" height="14.50" fill="none" stroke="#3a3a3a" stroke-width="0.9"/><line x1="378.50" y1="540.80" x2="378.50" y2="555.30" stroke="#3a3a3a" stroke-width="0.9"/><line x1="406.70" y1="540.80" x2="406.70" y2="555.30" stroke="#3a3a3a" stroke-width="0.9"/></svg>
<svg style="position:absolute;left:0;top:561.30px" width="1098" height="18.20" viewBox="0 561.30 1098 18.20"><rect x="347.50" y="563.30" width="154.80" height="14.20" fill="none" stroke="#3a3a3a" stroke-width="0.9"/><line x1="378.50" y1="563.30" x2="378.50" y2="577.50" stroke="#3a3a3a" stroke-width="0.9"/><line x1="406.70" y1="563.30" x2="406.70" y2="577.50" stroke="#3a3a3a" stroke-width="0.9"/></svg>
<div class="t" style="top:541.15px;font-size:11.0px;line-height:13.20px;right:722.00px;">311</div>
<div class="t" style="top:541.15px;font-size:11.0px;line-height:13.20px;right:694.00px;">366</div>
<div class="t" style="top:541.15px;font-size:11.0px;line-height:13.20px;left:415.60px;">Total hours</div>
<div class="t" style="top:563.60px;font-size:11.0px;line-height:13.20px;right:722.00px;">46</div>
<div class="t" style="top:563.60px;font-size:11.0px;line-height:13.20px;right:694.00px;">54</div>
<div class="t" style="top:563.60px;font-size:11.0px;line-height:13.20px;left:415.60px;">Total in percent</div>
<svg style="position:absolute;left:0;top:538.80px" width="1098" height="18.50" viewBox="0 538.80 1098 18.50"><rect x="549.30" y="540.80" width="294.20" height="14.50" fill="none" stroke="#3a3a3a" stroke-width="0.9"/><line x1="708.40" y1="540.80" x2="708.40" y2="555.30" stroke="#3a3a3a" stroke-width="0.9"/><line x1="728.80" y1="540.80" x2="728.80" y2="555.30" stroke="#3a3a3a" stroke-width="0.9"/><line x1="823.80" y1="540.80" x2="823.80" y2="555.30" stroke="#3a3a3a" stroke-width="0.9"/></svg>
<svg style="position:absolute;left:0;top:561.30px" width="1098" height="18.20" viewBox="0 561.30 1098 18.20"><rect x="549.30" y="563.30" width="294.20" height="14.20" fill="none" stroke="#3a3a3a" stroke-width="0.9"/><line x1="708.40" y1="563.30" x2="708.40" y2="577.50" stroke="#3a3a3a" stroke-width="0.9"/><line x1="728.80" y1="563.30" x2="728.80" y2="577.50" stroke="#3a3a3a" stroke-width="0.9"/><line x1="823.80" y1="563.30" x2="823.80" y2="577.50" stroke="#3a3a3a" stroke-width="0.9"/></svg>
<div class="t" style="top:541.15px;font-size:11.0px;line-height:13.20px;right:401.70px;">Total in nautical miles</div>
<div class="t" style="top:541.15px;font-size:11.0px;line-height:13.20px;left:710.60px;">132</div>
<div class="t" style="top:541.15px;font-size:11.0px;line-height:13.20px;right:256.60px;">133</div>
<div class="t" style="top:563.60px;font-size:11.0px;line-height:13.20px;right:401.70px;">Total in statute miles</div>
<div class="t" style="top:563.60px;font-size:11.0px;line-height:13.20px;left:710.60px;">152</div>
<div class="t" style="top:563.60px;font-size:11.0px;line-height:13.20px;right:256.60px;">153</div>
<div class="t b" style="top:590.78px;font-size:11.7px;line-height:14.04px;left:20.50px;">First Officer Navigation</div>
<div style="left:549.00px;top:587.20px;width:159.20px;height:17.60px;background:#ffff99;"></div>
<div class="t b" style="top:588.26px;font-size:13.4px;line-height:16.08px;left:552.00px;">Subject to change !</div>
<div style="left:13.00px;top:632.00px;width:38.50px;height:8.20px;background:#7a7a7a;"></div>
<div class="s" style="left:15.5px;top:632.6px;width:6px;text-align:center;font-size:4.6px;line-height:7px;color:#c9c9c9;">&#9664;</div>
<div class="s" style="left:24.1px;top:632.6px;width:6px;text-align:center;font-size:4.6px;line-height:7px;color:#c9c9c9;">&#9664;</div>
<div class="s" style="left:32.7px;top:632.6px;width:6px;text-align:center;font-size:4.6px;line-height:7px;color:#c9c9c9;">&#9654;</div>
<div class="s" style="left:41.3px;top:632.6px;width:6px;text-align:center;font-size:4.6px;line-height:7px;color:#c9c9c9;">&#9654;</div>
<div style="left:15.40px;top:633.80px;width:0.80px;height:4.60px;background:#c9c9c9;"></div>
<div style="left:46.40px;top:633.80px;width:0.80px;height:4.60px;background:#c9c9c9;"></div>
<svg style="position:absolute;left:0;top:632.0px" width="1098" height="8.2" viewBox="0 0 1098 8.2"><polygon points="52.5,0 99.5,0 93.5,8.200000000000045 46.5,8.200000000000045" fill="#e8212b"/><line x1="52.5" y1="0" x2="46.5" y2="8.200000000000045" stroke="#4a4a4a" stroke-width="0.7"/><polygon points="99.5,0 152.5,0 146.5,8.200000000000045 93.5,8.200000000000045" fill="#2b80cf"/><line x1="99.5" y1="0" x2="93.5" y2="8.200000000000045" stroke="#4a4a4a" stroke-width="0.7"/><polygon points="152.5,0 225.1,0 219.1,8.200000000000045 146.5,8.200000000000045" fill="#2b80cf"/><line x1="152.5" y1="0" x2="146.5" y2="8.200000000000045" stroke="#4a4a4a" stroke-width="0.7"/><polygon points="225.1,0 275.5,0 269.5,8.200000000000045 219.1,8.200000000000045" fill="#2b80cf"/><line x1="225.1" y1="0" x2="219.1" y2="8.200000000000045" stroke="#4a4a4a" stroke-width="0.7"/><polygon points="275.5,0 321.0,0 315.0,8.200000000000045 269.5,8.200000000000045" fill="#9fcf2a"/><line x1="275.5" y1="0" x2="269.5" y2="8.200000000000045" stroke="#4a4a4a" stroke-width="0.7"/><polygon points="321.0,0 389.0,0 383.0,8.200000000000045 315.0,8.200000000000045" fill="#9fcf2a"/><line x1="321.0" y1="0" x2="315.0" y2="8.200000000000045" stroke="#4a4a4a" stroke-width="0.7"/><polygon points="389.0,0 451.5,0 445.5,8.200000000000045 383.0,8.200000000000045" fill="#9fcf2a"/><line x1="389.0" y1="0" x2="383.0" y2="8.200000000000045" stroke="#4a4a4a" stroke-width="0.7"/><polygon points="451.5,0 516.0,0 510.0,8.200000000000045 445.5,8.200000000000045" fill="#8c8c8c"/><line x1="451.5" y1="0" x2="445.5" y2="8.200000000000045" stroke="#4a4a4a" stroke-width="0.7"/><polygon points="516.0,0 551.0,0 545.0,8.200000000000045 510.0,8.200000000000045" fill="#f4f4f4"/><line x1="516.0" y1="0" x2="510.0" y2="8.200000000000045" stroke="#4a4a4a" stroke-width="0.7"/><polygon points="551.0,0 611.1,0 605.1,8.200000000000045 545.0,8.200000000000045" fill="#f2ee2e"/><line x1="551.0" y1="0" x2="545.0" y2="8.200000000000045" stroke="#4a4a4a" stroke-width="0.7"/><polygon points="706.1,0 792.5,0 786.5,8.200000000000045 700.1,8.200000000000045" fill="#f6f29a"/><line x1="706.1" y1="0" x2="700.1" y2="8.200000000000045" stroke="#4a4a4a" stroke-width="0.7"/><polygon points="792.5,0 878.5,0 872.5,8.200000000000045 786.5,8.200000000000045" fill="#fcc81e"/><line x1="792.5" y1="0" x2="786.5" y2="8.200000000000045" stroke="#4a4a4a" stroke-width="0.7"/><polygon points="606.1,0 706.1,0 700.1,8.200000000000045 606.1,8.200000000000045" fill="#ffffff"/></svg>
<div class="s" style="top:631.89px;font-size:7.35px;line-height:8.82px;left:-124.90px;width:400px;text-align:center;color:#fff;">Trip Data</div>
<div class="s" style="top:631.89px;font-size:7.35px;line-height:8.82px;left:-74.90px;width:400px;text-align:center;color:#fff;">Voyage-Plan</div>
<div class="s" style="top:631.89px;font-size:7.35px;line-height:8.82px;left:-12.10px;width:400px;text-align:center;color:#fff;">Voyage Plan ISM</div>
<div class="s" style="top:631.89px;font-size:7.35px;line-height:8.82px;left:49.40px;width:400px;text-align:center;color:#fff;">Particulars</div>
<div class="s" style="top:631.89px;font-size:7.35px;line-height:8.82px;left:97.35px;width:400px;text-align:center;color:#1a1a1a;">Charts All</div>
<div class="s" style="top:631.89px;font-size:7.35px;line-height:8.82px;left:154.10px;width:400px;text-align:center;color:#1a1a1a;">Charts by Folios</div>
<div class="s" style="top:631.89px;font-size:7.35px;line-height:8.82px;left:219.35px;width:400px;text-align:center;color:#1a1a1a;">Charts by Trip</div>
<div class="s" style="top:631.89px;font-size:7.35px;line-height:8.82px;left:282.85px;width:400px;text-align:center;color:#e6e6e6;">Folio Overview</div>
<div class="s" style="top:631.89px;font-size:7.35px;line-height:8.82px;left:332.60px;width:400px;text-align:center;color:#1a1a1a;">Print...</div>
<div class="s" style="top:631.89px;font-size:7.35px;line-height:8.82px;left:380.15px;width:400px;text-align:center;color:#1a1a1a;">Trip Database</div>
<div class="s b" style="top:631.50px;font-size:8.0px;line-height:9.60px;left:457.70px;width:400px;text-align:center;color:#000;">Export (Itinerary Plan)</div>
<div class="s" style="top:631.89px;font-size:7.35px;line-height:8.82px;left:548.40px;width:400px;text-align:center;color:#1a1a1a;">Export (Day-by-day)</div>
<div class="s" style="top:631.89px;font-size:7.35px;line-height:8.82px;left:634.60px;width:400px;text-align:center;color:#1a1a1a;">Help &amp; Instructions</div>
<svg style="position:absolute;left:872px;top:632.0px" width="30" height="8.2"><polygon points="6.500,0 27,0 23,8.200000000000045 0.500,8.200000000000045" fill="#707070"/><rect x="9.600" y="1.800" width="5.400" height="4.800" fill="#e8eefc" stroke="#9db4e0" stroke-width=".6"/><circle cx="9.600" cy="2.300" r="1.500" fill="#f0b83a"/></svg>
<div style="left:897.50px;top:632.30px;width:2.00px;height:7.60px;background:#8a8a8a;border-radius:1px;"></div>
<div style="left:903.50px;top:632.00px;width:122.00px;height:8.20px;background:#6f6f6f;"></div>
<div style="left:904.00px;top:632.50px;width:8.00px;height:7.20px;background:#707070;"></div>
<div style="left:913.20px;top:632.60px;width:98.60px;height:7.00px;background:linear-gradient(180deg,#858585,#6f6f6f);border:0.6px solid #5a5a5a;border-radius:1px;"></div>
<div class="s" style="left:904px;top:632.4px;width:8px;text-align:center;font-size:5px;line-height:7.4px;color:#2e2e2e;">&#9664;</div>
<div class="s" style="left:1013.5px;top:632.4px;width:8px;text-align:center;font-size:5px;line-height:7.4px;color:#2e2e2e;">&#9654;</div>
<div style="left:961.50px;top:634.60px;width:0.70px;height:3.00px;background:#9a9a9a;"></div>
<div style="left:963.00px;top:634.60px;width:0.70px;height:3.00px;background:#9a9a9a;"></div>
<div style="left:964.50px;top:634.60px;width:0.70px;height:3.00px;background:#9a9a9a;"></div>
<div style="left:1023.40px;top:633.00px;width:1.60px;height:6.20px;background:#9a9a9a;"></div>
<div style="left:1027.00px;top:626.00px;width:11.00px;height:14.20px;background:#6a6a6a;"></div>
<div class="s" style="top:643.66px;font-size:6.9px;line-height:8.28px;left:17.40px;color:#e2e2e2;">Bereit</div>
<div style="left:57.20px;top:643.30px;width:0.70px;height:9.00px;background:#2c2c2c;"></div>
<svg style="position:absolute;left:62.8px;top:643.2px" width="10" height="9" viewBox="0 0 10 9"><rect x="0.4" y="0.8" width="8.2" height="7.2" fill="#eef2fb" stroke="#9fb3dd" stroke-width=".6"/><rect x="0.8" y="4.6" width="7.4" height="3" fill="#5d8de0"/><circle cx="1.4" cy="1.8" r="1.5" fill="#e0653a"/></svg>
<div style="left:893.00px;top:642.00px;width:11.40px;height:11.40px;background:#ffdf6a;border:1px solid #d8a52a;border-radius:1px;"></div>
<svg style="position:absolute;left:893px;top:642.2px" width="36" height="11" viewBox="0 0 36 11"><rect x="2.500" y="2.300" width="6.800" height="6.400" fill="#f4f4f4" stroke="#6c6c8c" stroke-width=".6"/><path d="M2.500 4.400h6.800M2.500 6.600h6.800M4.800 2.300v6.400M7 2.300v6.400" stroke="#6c6c8c" stroke-width=".5"/><rect x="13.3" y="2.3" width="6.6" height="6" fill="#cfcfcf" stroke="#9a9a9a" stroke-width=".6"/><rect x="14.8" y="3.6" width="3.6" height="3.4" fill="#8a8a8a"/><rect x="25.2" y="2.1" width="6.6" height="6.2" fill="#d6d6d6" stroke="#a0a0a0" stroke-width=".6"/><path d="M28.5 2.1v4M25.2 6.2h6.6" stroke="#777" stroke-width=".7"/></svg>
<div class="s" style="top:643.66px;font-size:6.9px;line-height:8.28px;left:933.40px;color:#d8d8d8;">140 %</div>
<svg style="position:absolute;left:955px;top:642.1px" width="84" height="12" viewBox="0 0 84 12"><circle cx="6.2" cy="5.7" r="3.9" fill="#d8d8d8" stroke="#8a8a8a" stroke-width=".5"/><rect x="3.9" y="5" width="4.6" height="1.5" fill="#3a3a3a"/><rect x="11" y="5.4" width="62" height=".8" fill="#565656"/><path d="M43.6 2.4h3.4v4.2l-1.7 1.8-1.7-1.8z" fill="#c6c6c6" stroke="#8a8a8a" stroke-width=".4"/><circle cx="77.3" cy="5.7" r="3.9" fill="#d8d8d8" stroke="#8a8a8a" stroke-width=".5"/><rect x="75" y="5" width="4.6" height="1.5" fill="#3a3a3a"/><rect x="76.55" y="3.4" width="1.5" height="4.6" fill="#3a3a3a"/></svg>
<div style="left:1027.00px;top:42.50px;width:11.00px;height:27.00px;background:linear-gradient(180deg,#858585,#7a7a7a);border-left:1px solid #5a5a5a;"></div>
<div style="left:1028.20px;top:43.30px;width:9.00px;height:3.60px;background:#a2a2a2;border:0.6px solid #4a4a4a;"></div>
<div class="s" style="left:1028px;top:49.7px;width:9.600px;text-align:center;font-size:4.600px;line-height:7px;color:#2c2c2c;">&#9650;</div>
<div style="left:1027.60px;top:69.40px;width:10.40px;height:550.00px;background:linear-gradient(90deg,#4e4e4e 0%,#6c6c6c 18%,#787878 50%,#6c6c6c 80%,#4a4a4a 100%);border-top:0.8px solid #484848;border-bottom:0.8px solid #484848;border-radius:1px;"></div>
<div style="left:1027.60px;top:69.40px;width:10.40px;height:550.00px;background:linear-gradient(180deg,rgba(255,255,255,.06) 0%,rgba(0,0,0,0) 40%,rgba(0,0,0,.22) 100%);"></div>
<div style="left:1030.40px;top:342.50px;width:4.20px;height:0.60px;background:#9a9a9a;"></div>
<div style="left:1030.40px;top:344.00px;width:4.20px;height:0.60px;background:#9a9a9a;"></div>
<div style="left:1030.40px;top:345.50px;width:4.20px;height:0.60px;background:#9a9a9a;"></div>
<div style="left:1027.00px;top:619.60px;width:11.00px;height:12.40px;background:#626262;border-left:1px solid #4a4a4a;"></div>
<div class="s" style="left:1028px;top:622.2px;width:9.600px;text-align:center;font-size:4.600px;line-height:7px;color:#2c2c2c;">&#9660;</div>
<div style="left:940.00px;top:13.00px;width:98.00px;height:28.70px;background:linear-gradient(90deg,rgba(125,150,200,0) 0%,rgba(125,150,200,.12) 45%,rgba(125,150,200,.6) 100%);"></div>
<svg style="position:absolute;left:960px;top:13px" width="78" height="30" viewBox="0 0 78 30"><rect x="14.800" y="0.300" width="62.800" height="10.900" rx="1.600" fill="rgba(150,175,220,.22)" stroke="rgba(205,218,240,.5)" stroke-width=".6"/><path d="M32 .5v10.500M48.100 .5v10.500" stroke="rgba(205,218,240,.45)" stroke-width=".6"/><rect x="21.100" y="5" width="6.400" height="2.100" fill="#eef1f8" stroke="#4e5e7c" stroke-width=".45"/><rect x="37.200" y="3.300" width="5" height="4.300" fill="none" stroke="#eef1f8" stroke-width="1.200"/><path d="M39.400 2.600v-1.200h4.800v4h-1.400" fill="none" stroke="#dfe6f4" stroke-width=".8"/><path d="M61.300 2.600l4.600 4.800M65.900 2.600l-4.600 4.800" stroke="#f2f4fa" stroke-width="1.400"/><path d="M17.300 20.400l2 2 2-2" stroke="#d6d6d6" stroke-width="1.100" fill="none"/><circle cx="32.500" cy="21.200" r="4.300" fill="#2f74d8" stroke="#8db4ee" stroke-width=".7"/><rect x="44" y="21.300" width="5.400" height="1.800" fill="#e6e6e6"/><path d="M56.600 24.300v-3.600h3.200v3.600zM58.400 20.500v-1.700h3.400v3.600h-1.800" stroke="#d2d2d2" stroke-width=".8" fill="none"/><path d="M71.100 19l4 4.200M75.100 19l-4 4.200" stroke="#e8e8e8" stroke-width="1.300"/><text x="32.500" y="23.800" font-family="Liberation Sans, sans-serif" font-weight="bold" font-size="7" fill="#fff" text-anchor="middle">?</text></svg>
<svg style="position:absolute;left:13px;top:13px" width="165" height="15" viewBox="0 0 165 15"><g transform="translate(0.4,2.400)"><rect x="0.300" y="0.300" width="8" height="8.400" fill="#dfeed8" stroke="#7fb070" stroke-width=".6"/><path d="M1.800 1.600l5 6M6.800 1.600l-5 6" stroke="#1f7a2c" stroke-width="1.900"/></g><path d="M12.300 3v8M13.500 3v8" stroke="#8d97a8" stroke-width=".5"/><g transform="translate(18.4,2.400)"><rect x="0" y="0" width="8" height="8.600" fill="#3a3fae"/><rect x="1.600" y="0.400" width="4.600" height="3.200" fill="#f2f2ff"/><path d="M2.600 8.400l3.800-4v4z" fill="#e8e8f8"/></g><g transform="translate(30.7,2.400)"><path d="M1.600 4.200c1-3.400 5.600-3.200 5.400.4c-.1 1.700-1 2.600-2 3.600" stroke="#2c5fd0" stroke-width="1.700" fill="none"/><path d="M.3 1.400l.2 3.800 3.400-1z" fill="#2c5fd0"/></g><g transform="translate(41.8,2.400)"><path d="M0 3.400h3.200l-1.600 1.900z" fill="#222"/></g><g transform="translate(50.4,2.400)"><path d="M6.400 4.200c-.8-3-5-3-5.200.2c0 1.600.8 2.400 1.800 3.200" stroke="#98a0b0" stroke-width="1.500" fill="none"/><path d="M7.400 1.600l-.2 3.400-3-.9z" fill="#98a0b0"/></g><g transform="translate(62.2,2.400)"><path d="M0 3.600h2.400l-1.200 1.500z" fill="#9aa2b2"/></g><g transform="translate(69.5,2.400)"><path d="M.6 0h4.400l2.600 2.600v6.200h-7z" fill="#fbfbfb" stroke="#8a94a8" stroke-width=".6"/><rect x="4" y="5.200" width="4" height="3.600" fill="#e49a3a"/></g><g transform="translate(82.9,2.400)"><rect x="0.300" y="1.200" width="8" height="6.600" fill="#e8ebf2" stroke="#6c7a94" stroke-width=".7"/><rect x="2.300" y="2.800" width="4" height="3.200" fill="#7f8ba4"/><rect x="5.600" y="0" width="3" height="3" fill="#5b6f9a"/></g><g transform="translate(96.2,2.400)"><rect x="0.300" y="1.600" width="8.600" height="6.400" fill="#e2e6ee" stroke="#6c7a94" stroke-width=".7"/><rect x="2.800" y="0.400" width="3.600" height="1.800" fill="#6c7a94"/><circle cx="4.600" cy="4.900" r="1.800" fill="#7886a0"/></g><g transform="translate(110.2,2.400)"><rect x="0.300" y="1.400" width="8.600" height="7" fill="#dfe6e0" stroke="#6c8a74" stroke-width=".7"/><circle cx="5.400" cy="3.400" r="2.300" fill="#3f9a52"/><rect x="1.400" y="3.800" width="2.600" height="3.600" fill="#6c7a94"/><rect x="5" y="5.600" width="2.600" height="2.400" fill="#b8c4dc"/></g><g transform="translate(124.2,2.400)"><rect x="0.300" y="0.800" width="8.600" height="7.400" fill="#f2f4fa" stroke="#7a86a0" stroke-width=".6"/><path d="M.8 1.200h4.200v3.200h-4.200z" fill="#e0503a"/><path d="M1.200 7.800l2.200-2.600 1.800 1.400 2.800-2.600v3.800z" fill="#5a86d8"/></g><text x="140.600" y="10.800" font-family="Liberation Serif, serif" font-size="10.600" fill="#3a62b8" text-anchor="middle">A</text><path d="M149.200 3v8M150.300 3v8" stroke="#8d97a8" stroke-width=".5"/><g transform="translate(153.4,2.400)"><path d="M0 1.800h3.800" stroke="#2a2a2a" stroke-width=".9"/><path d="M-.2 3.600h4.200l-2.100 2.300z" fill="#2a2a2a"/></g></svg>
<div style="left:846.80px;top:240.00px;width:133.20px;height:228.20px;background:linear-gradient(180deg,#c3d0e6 0px,#b4c4e0 18px,#8fa9d6 60px,#4a78c4 110px,#3f6fbe 228px);border:0.8px solid #3c4a66;border-radius:3.5px;box-shadow:1px 2px 5px rgba(0,0,0,.45);"></div>
<div style="left:847.60px;top:240.80px;width:131.60px;height:226.60px;border:0.7px solid rgba(255,255,255,.55);border-radius:3px;"></div>
<div style="left:851.80px;top:257.60px;width:124.00px;height:206.40px;background:#f0f0f0;border:0.6px solid #7c8aa6;"></div>
<div class="s" style="top:245.25px;font-size:7.25px;line-height:8.70px;left:851.60px;color:#1c1c1c;text-shadow:0 0 3px #fff;">Export to voyage plan...</div>
<div style="left:947.60px;top:240.40px;width:28.30px;height:11.00px;background:linear-gradient(180deg,#dc9a90 0%,#c9594a 45%,#b5301f 52%,#c6482f 100%);border:0.7px solid #5e2620;border-radius:0 0 2.5px 2.5px;border-top:none;"></div>
<svg style="position:absolute;left:957.4px;top:241.4px" width="9" height="8" viewBox="0 0 9 8"><path d="M2.600 2l3.800 3.800M6.400 2l-3.800 3.800" stroke="#fff" stroke-width="1.400"/></svg>
<div class="s b" style="top:265.17px;font-size:7.55px;line-height:9.06px;left:855.00px;color:#111;">Select year:</div>
<div style="left:900.80px;top:263.60px;width:42.20px;height:10.80px;background:#fff;border:0.8px solid #6a6a6a;border-right-color:#d8d8d8;border-bottom-color:#d8d8d8;"></div>
<div class="s" style="top:265.84px;font-size:6.6px;line-height:7.92px;left:907.30px;color:#222;">2015</div>
<div style="left:933.40px;top:264.50px;width:8.80px;height:9.00px;background:#f0f0f0;border:0.7px solid #fafafa;border-right-color:#5e5e5e;border-bottom-color:#5e5e5e;"></div>
<div style="left:935.70px;top:268.20px;width:0;height:0;border-left:2.100px solid transparent;border-right:2.100px solid transparent;border-top:2.400px solid #111;"></div>
<div style="left:886.90px;top:281.90px;width:6.20px;height:6.20px;background:#fff;border:0.8px solid #7a7a7a;border-right-color:#dcdcdc;border-bottom-color:#dcdcdc;border-radius:50%;"></div>
<div class="s" style="top:282.28px;font-size:6.7px;line-height:8.04px;left:898.20px;color:#222;">whole year</div>
<div style="left:856.00px;top:291.40px;width:116.50px;height:0.80px;background:#c2c2c2;"></div>
<div style="left:856.00px;top:292.20px;width:116.50px;height:0.70px;background:#fbfbfb;"></div>
<div style="left:886.90px;top:297.10px;width:6.20px;height:6.20px;background:#fff;border:0.8px solid #7a7a7a;border-right-color:#dcdcdc;border-bottom-color:#dcdcdc;border-radius:50%;"></div>
<div style="left:888.80px;top:299.00px;width:2.40px;height:2.40px;background:#111;border-radius:50%;"></div>
<div class="s" style="top:297.31px;font-size:6.65px;line-height:7.98px;left:898.20px;color:#222;">select fixed time range:</div>
<div class="s" style="top:310.14px;font-size:6.6px;line-height:7.92px;right:203.40px;color:#8c8c8c;">from:</div>
<div style="left:900.60px;top:308.00px;width:67.00px;height:10.70px;background:#fff;border:0.8px solid #6a6a6a;border-right-color:#d8d8d8;border-bottom-color:#d8d8d8;"></div>
<div class="s" style="top:310.19px;font-size:6.6px;line-height:7.92px;left:907.10px;color:#222;">February</div>
<div style="left:958.00px;top:308.90px;width:8.80px;height:8.90px;background:#f0f0f0;border:0.7px solid #fafafa;border-right-color:#5e5e5e;border-bottom-color:#5e5e5e;"></div>
<div style="left:960.30px;top:312.55px;width:0;height:0;border-left:2.100px solid transparent;border-right:2.100px solid transparent;border-top:2.400px solid #111;"></div>
<div class="s" style="top:324.74px;font-size:6.6px;line-height:7.92px;right:203.40px;color:#8c8c8c;">to:</div>
<div style="left:900.60px;top:322.80px;width:67.00px;height:10.90px;background:#fff;border:0.8px solid #6a6a6a;border-right-color:#d8d8d8;border-bottom-color:#d8d8d8;"></div>
<div class="s" style="top:325.09px;font-size:6.6px;line-height:7.92px;left:907.10px;color:#222;">February</div>
<div style="left:958.00px;top:323.70px;width:8.80px;height:9.10px;background:#f0f0f0;border:0.7px solid #fafafa;border-right-color:#5e5e5e;border-bottom-color:#5e5e5e;"></div>
<div style="left:960.30px;top:327.45px;width:0;height:0;border-left:2.100px solid transparent;border-right:2.100px solid transparent;border-top:2.400px solid #111;"></div>
<div style="left:856.00px;top:337.80px;width:116.50px;height:0.80px;background:#c2c2c2;"></div>
<div style="left:856.00px;top:338.60px;width:116.50px;height:0.70px;background:#fbfbfb;"></div>
<div style="left:886.70px;top:342.50px;width:6.20px;height:6.20px;background:#fff;border:0.8px solid #7a7a7a;border-right-color:#dcdcdc;border-bottom-color:#dcdcdc;border-radius:50%;"></div>
<div class="s" style="top:343.04px;font-size:6.6px;line-height:7.92px;left:898.20px;color:#222;">custom time range:</div>
<div class="s" style="top:354.94px;font-size:6.6px;line-height:7.92px;right:203.50px;color:#8c8c8c;">from:</div>
<div style="left:900.60px;top:352.90px;width:27.20px;height:10.00px;background:#f0f0f0;border:0.8px solid #a6a6a6;border-right-color:#e4e4e4;border-bottom-color:#e4e4e4;"></div>
<div class="s" style="top:354.74px;font-size:6.6px;line-height:7.92px;left:908.10px;color:#a8a8a8;">1</div>
<div style="left:918.20px;top:353.80px;width:8.80px;height:8.20px;background:#f0f0f0;border:0.7px solid #fafafa;border-right-color:#5e5e5e;border-bottom-color:#5e5e5e;"></div>
<div style="left:920.50px;top:357.10px;width:0;height:0;border-left:2.100px solid transparent;border-right:2.100px solid transparent;border-top:2.400px solid #a0a0a0;"></div>
<div style="left:930.30px;top:352.90px;width:37.30px;height:10.00px;background:#f0f0f0;border:0.8px solid #a6a6a6;border-right-color:#e4e4e4;border-bottom-color:#e4e4e4;"></div>
<div class="s" style="top:354.74px;font-size:6.6px;line-height:7.92px;left:936.80px;color:#a8a8a8;">Oct</div>
<div style="left:958.00px;top:353.80px;width:8.80px;height:8.20px;background:#f0f0f0;border:0.7px solid #fafafa;border-right-color:#5e5e5e;border-bottom-color:#5e5e5e;"></div>
<div style="left:960.30px;top:357.10px;width:0;height:0;border-left:2.100px solid transparent;border-right:2.100px solid transparent;border-top:2.400px solid #a0a0a0;"></div>
<div class="s" style="top:369.94px;font-size:6.6px;line-height:7.92px;right:203.50px;color:#8c8c8c;">to:</div>
<div style="left:900.60px;top:367.90px;width:13.60px;height:10.20px;background:#f0f0f0;border:0.8px solid #a6a6a6;border-right-color:#e4e4e4;border-bottom-color:#e4e4e4;"></div>
<div class="s" style="top:369.84px;font-size:6.6px;line-height:7.92px;left:905.60px;color:#a8a8a8;">2</div>
<div style="left:915.40px;top:367.90px;width:23.10px;height:10.20px;background:#f0f0f0;border:0.8px solid #a6a6a6;border-right-color:#e4e4e4;border-bottom-color:#e4e4e4;"></div>
<div class="s" style="top:369.84px;font-size:6.6px;line-height:7.92px;left:922.00px;color:#a8a8a8;">Oct</div>
<div style="left:939.50px;top:367.90px;width:28.10px;height:10.20px;background:#f0f0f0;border:0.8px solid #a6a6a6;border-right-color:#e4e4e4;border-bottom-color:#e4e4e4;"></div>
<div class="s" style="top:369.84px;font-size:6.6px;line-height:7.92px;left:946.10px;color:#a8a8a8;">2015</div>
<div style="left:900.60px;top:382.00px;width:67.40px;height:9.40px;background:#fafafa;"></div>
<div style="left:900.60px;top:382.00px;width:8.60px;height:9.40px;background:#f0f0f0;border:0.7px solid #fafafa;border-right-color:#5e5e5e;border-bottom-color:#5e5e5e;"></div>
<div style="left:909.20px;top:382.00px;width:7.80px;height:9.40px;background:#f0f0f0;border:0.7px solid #fafafa;border-right-color:#5e5e5e;border-bottom-color:#5e5e5e;"></div>
<div style="left:959.40px;top:382.00px;width:8.60px;height:9.40px;background:#f0f0f0;border:0.7px solid #fafafa;border-right-color:#5e5e5e;border-bottom-color:#5e5e5e;"></div>
<div style="left:903.2px;top:384.6px;width:0;height:0;border-top:2.100px solid transparent;border-bottom:2.100px solid transparent;border-right:2.400px solid #222;"></div>
<div style="left:962.6px;top:384.6px;width:0;height:0;border-top:2.100px solid transparent;border-bottom:2.100px solid transparent;border-left:2.400px solid #a0a0a0;"></div>
<div style="left:853.00px;top:397.50px;width:120.50px;height:0.80px;background:#c2c2c2;"></div>
<div style="left:853.00px;top:398.30px;width:120.50px;height:0.70px;background:#fbfbfb;"></div>
<div style="left:871.90px;top:402.80px;width:6.80px;height:6.80px;background:#fff;border:0.8px solid #6a6a6a;border-right-color:#d8d8d8;border-bottom-color:#d8d8d8;"></div>
<svg style="position:absolute;left:871.90px;top:402.80px" width="6.800" height="6.800" viewBox="0 0 6.800 6.800"><path d="M1.500 3.300l1.400 1.600 2.500-3.200" stroke="#111" stroke-width="1.200" fill="none"/></svg>
<div class="s" style="top:403.55px;font-size:6.42px;line-height:7.70px;left:883.60px;color:#111;">Include cell comments</div>
<div style="left:871.90px;top:415.80px;width:6.80px;height:6.80px;background:#fff;border:0.8px solid #6a6a6a;border-right-color:#d8d8d8;border-bottom-color:#d8d8d8;"></div>
<svg style="position:absolute;left:871.90px;top:415.80px" width="6.800" height="6.800" viewBox="0 0 6.800 6.800"><path d="M1.500 3.300l1.400 1.600 2.500-3.200" stroke="#111" stroke-width="1.200" fill="none"/></svg>
<div class="s" style="top:416.48px;font-size:6.36px;line-height:7.63px;left:883.60px;color:#111;">Color commented cells</div>
<div style="left:871.90px;top:429.60px;width:6.80px;height:6.80px;background:#fff;border:0.8px solid #6a6a6a;border-right-color:#d8d8d8;border-bottom-color:#d8d8d8;"></div>
<svg style="position:absolute;left:871.90px;top:429.60px" width="6.800" height="6.800" viewBox="0 0 6.800 6.800"><path d="M1.500 3.300l1.400 1.600 2.500-3.200" stroke="#111" stroke-width="1.200" fill="none"/></svg>
<div class="s" style="top:430.09px;font-size:6.68px;line-height:8.02px;left:883.60px;color:#111;">Export to separate Excel file</div>
<div style="left:880.60px;top:428.40px;width:88.00px;height:9.80px;border:1px dotted #8a8a8a;"></div>
<div style="left:856.20px;top:444.20px;width:53.80px;height:15.60px;background:#f0f0f0;border:1px solid #2a2a2a;box-shadow:inset -0.8px -0.8px 0 #6a6a6a, inset 0.8px 0.8px 0 #fff;"></div>
<div class="s" style="top:448.94px;font-size:6.6px;line-height:7.92px;left:683.00px;width:400px;text-align:center;color:#111;">OK</div>
<div style="left:917.00px;top:444.20px;width:53.40px;height:15.60px;background:#f0f0f0;border:0.8px solid #fdfdfd;border-right-color:#4e4e4e;border-bottom-color:#4e4e4e;"></div>
<div class="s" style="top:448.94px;font-size:6.6px;line-height:7.92px;left:743.60px;width:400px;text-align:center;color:#111;">Cancel</div>

</div>
</body></html>
